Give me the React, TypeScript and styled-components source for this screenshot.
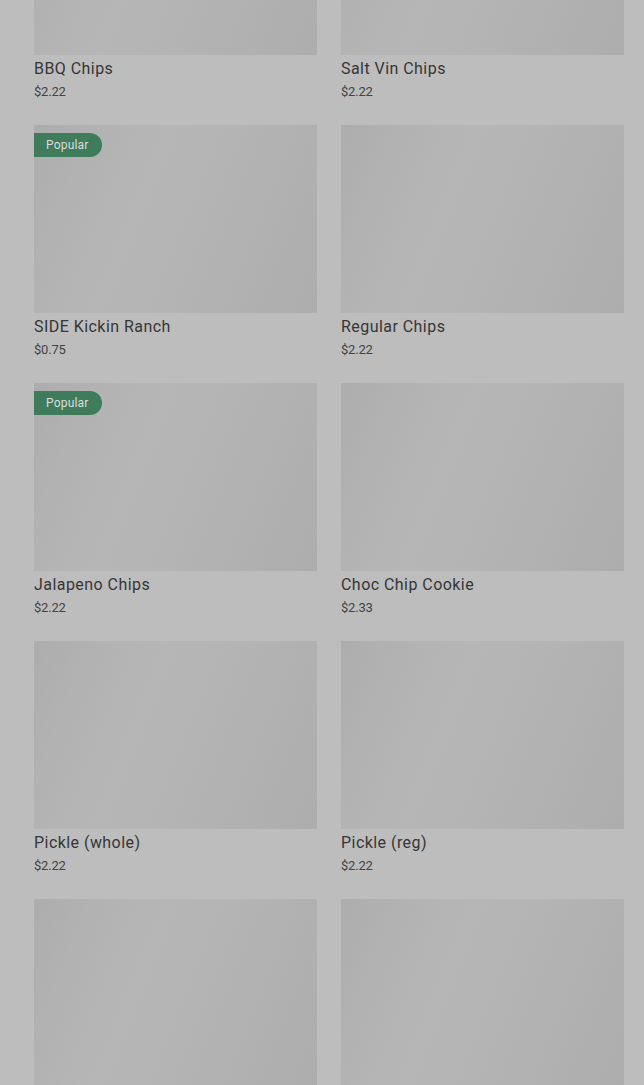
import React from "react";
import styled, { createGlobalStyle } from "styled-components";

const Global = createGlobalStyle`
  html, body { margin: 0; padding: 0; background: #bdbdbd; overflow: hidden; }
  body { font-family: Roboto, "Liberation Sans", Arial, sans-serif; }
`;

const Page = styled.div`
  padding: 0 20px 0 34px;
  margin-top: -133px;
`;

const Grid = styled.div`
  display: grid;
  grid-template-columns: 283px 283px;
  column-gap: 24px;
  row-gap: 24px;
`;

const Card = styled.div`
  display: flex;
  flex-direction: column;
`;

const Thumb = styled.div`
  position: relative;
  height: 188px;
  background: linear-gradient(112deg, #adadad 0%, #b2b2b2 18%, #b6b6b6 38%, #b3b3b3 62%, #adadad 100%);
`;

const Badge = styled.span`
  position: absolute;
  top: 8px;
  left: 0;
  height: 24px;
  padding: 0 13px 0 12px;
  display: flex;
  align-items: center;
  background: #3f7c5c;
  color: #dcdcdc;
  font-size: 12px;
  letter-spacing: 0.2px;
  border-radius: 0 12px 12px 0;
`;

const Info = styled.div`
  padding-top: 4px;
`;

const Title = styled.div`
  font-size: 16px;
  line-height: 20px;
  font-weight: 400;
  letter-spacing: 0.45px;
  color: #363636;
`;

const Price = styled.div`
  margin-top: 4px;
  font-size: 13px;
  line-height: 18px;
  color: #444;
  letter-spacing: -0.2px;
`;

const items: { name?: string; price?: string; popular?: boolean }[] = [
  { name: "BBQ Chips", price: "$2.22" },
  { name: "Salt Vin Chips", price: "$2.22" },
  { name: "SIDE Kickin Ranch", price: "$0.75", popular: true },
  { name: "Regular Chips", price: "$2.22" },
  { name: "Jalapeno Chips", price: "$2.22", popular: true },
  { name: "Choc Chip Cookie", price: "$2.33" },
  { name: "Pickle (whole)", price: "$2.22" },
  { name: "Pickle (reg)", price: "$2.22" },
  {},
  {},
];

export default function App() {
  return (
    <>
      <Global />
      <Page>
        <Grid>
          {items.map((it, i) => (
            <Card key={i}>
              <Thumb>{it.popular && <Badge>Popular</Badge>}</Thumb>
              {it.name && (
                <Info>
                  <Title>{it.name}</Title>
                  <Price>{it.price}</Price>
                </Info>
              )}
            </Card>
          ))}
        </Grid>
      </Page>
    </>
  );
}
